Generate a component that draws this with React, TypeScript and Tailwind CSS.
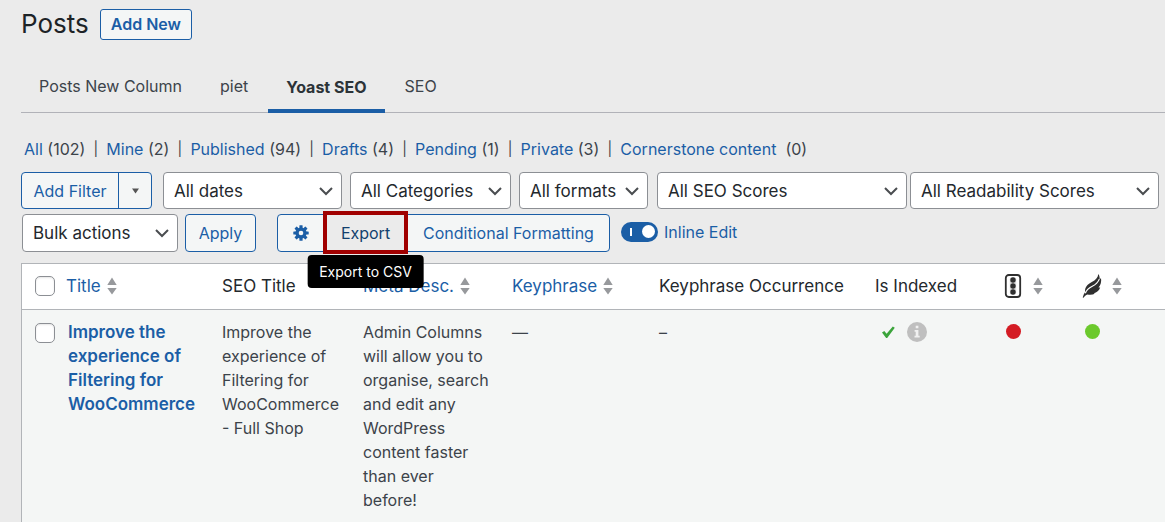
import type { ReactNode } from "react";

const tabs = [
  { label: "Posts New Column", active: false },
  { label: "piet", active: false },
  { label: "Yoast SEO", active: true },
  { label: "SEO", active: false },
];

const views = [
  { label: "All", count: 102 },
  { label: "Mine", count: 2 },
  { label: "Published", count: 94 },
  { label: "Drafts", count: 4 },
  { label: "Pending", count: 1 },
  { label: "Private", count: 3 },
];

function Select({ label, className }: { label: string; className: string }) {
  return (
    <div className={`relative ${className}`}>
      <select
        aria-label={label}
        className="h-full w-full appearance-none rounded-[4px] border border-[#8c8f94] bg-white pt-[2px] pr-6 pl-[10px] text-[17px] text-[#23282d]"
      >
        <option>{label}</option>
      </select>
      <svg
        className="pointer-events-none absolute top-1/2 right-[9px] h-[14px] w-[14px] -translate-y-1/2"
        viewBox="0 0 14 14"
        fill="none"
        stroke="#4a4d50"
        strokeWidth="2"
        aria-hidden="true"
      >
        <path d="M1 4l6 6 6-6" />
      </svg>
    </div>
  );
}

function SortArrows() {
  return (
    <svg width="10" height="18" viewBox="0 0 10 18" fill="#97999c" aria-hidden="true">
      <path d="M5 0.500l4.700 7.500H.3zM5 17.500L.3 11h9.400z" />
    </svg>
  );
}

function SortLink({ label, children }: { label?: string; children: ReactNode }) {
  return (
    <a
      href="#sort"
      aria-label={label}
      className={`flex items-center text-[#1b5ea6] ${label ? "gap-[10px]" : "gap-[6px]"}`}
    >
      {children}
      <SortArrows />
    </a>
  );
}

function Gear() {
  return (
    <svg width="16" height="16" viewBox="0 0 16 16" aria-hidden="true">
      <g fill="#1b5ea6">
        {[0, 45, 90, 135].map((a) => (
          <rect key={a} x="6.400" y="0.300" width="3.200" height="15.400" rx="0.500" transform={`rotate(${a} 8 8)`} />
        ))}
        <circle cx="8" cy="8" r="5.600" />
      </g>
      <circle cx="8" cy="8" r="2.300" fill="#f4f6f6" />
    </svg>
  );
}

function TrafficLight() {
  return (
    <svg width="20" height="24" viewBox="0 0 20 24" aria-hidden="true">
      <rect x="2.800" y="1" width="14.400" height="22" rx="3" fill="#fff" stroke="#2f2f2f" strokeWidth="1.800" />
      <rect x="6.800" y="3.200" width="6.400" height="17.600" rx="2" fill="#d9d9d9" />
      <g fill="#2f2f2f">
        <circle cx="10" cy="6" r="2.700" />
        <circle cx="10" cy="12" r="2.700" />
        <circle cx="10" cy="18" r="2.700" />
      </g>
    </svg>
  );
}

function Feather() {
  return (
    <svg width="20" height="24" viewBox="0 0 20 24" aria-hidden="true">
      <path
        fill="#2f2f2f"
        d="M16.300 0c1.200 1.800 1.600 3.600 1.300 5.600.6-.5 1-.9 1.400-1.600.6 3.800-.2 7-2.500 9.600h1.700c-1.200 3.200-3.400 5-6.400 5.600l1 .6c-2.200 1-4.500 1.200-7.300.7-1.700.6-3 1.700-4 3.300L.7 23.500c.6-2.200 1.300-4 2.400-5.600-.4-4.500 2-7.700 6.700-10 4-1.900 6.200-4.200 6.500-7.900z"
      />
      <path fill="none" stroke="#fff" strokeWidth="1.200" d="M3.300 19.300c1.200-3.600 3.800-5.400 7-7 3.300-1.700 5.800-4 7-7.200" />
    </svg>
  );
}

const checkbox =
  "block h-5 w-5 appearance-none rounded-[5px] border border-[#8c8f94] bg-white shadow-[inset_0_1px_2px_rgba(0,0,0,0.1)]";

export default function App() {
  return (
    <main className="flex min-h-screen flex-col bg-[#ebebeb] pl-[21px] font-['Inter','Liberation_Sans',sans-serif] text-base text-[#3c434a]">
      <header className="flex items-center gap-[11px] pt-2">
        <h1 className="text-[26px] leading-8 text-[#1d2327]">Posts</h1>
        <button className="h-[31px] rounded-[3px] border border-[#1b5ea6] bg-[#f4f6f6] px-[10px] text-base font-semibold text-[#1b5ea6]">
          Add New
        </button>
      </header>

      <nav aria-label="Table views" className="mt-5 flex h-[53px] gap-[2px] border-b border-[#b1b2b8]">
        {tabs.map((t) => (
          <a
            key={t.label}
            href="#view"
            aria-current={t.active ? "page" : undefined}
            className={
              t.active
                ? "-mb-px flex items-center border-b-4 border-[#1b5ea6] px-[18px] pt-1 font-bold text-[#2c3338]"
                : "flex items-center px-[18px]"
            }
          >
            {t.label}
          </a>
        ))}
      </nav>

      <ul className="mt-6 flex items-center pl-[3px] leading-6 whitespace-pre">
        {views.map((v) => (
          <li key={v.label} className="flex items-center">
            <a href="#status" className="text-[#1b5ea6]">
              {v.label}
            </a>
            {` (${v.count})`}
            <span className="w-[21px] text-center text-sm">|</span>
          </li>
        ))}
        <li>
          <a href="#cornerstone" className="text-[#1b5ea6]">
            Cornerstone content
          </a>
          {"  (0)"}
        </li>
      </ul>

      <div className="mt-[11px] flex h-[37px]">
        <div className="mr-[11px] flex w-[131px] divide-x divide-[#1b5ea6] overflow-hidden rounded-[4px] border border-[#1b5ea6] bg-[#f4f6f6] text-[#1b5ea6]">
          <button className="flex-1 whitespace-nowrap">Add Filter</button>
          <button aria-label="More filters" className="flex w-8 items-center justify-center">
            <svg width="7" height="6" viewBox="0 0 7 6" fill="#555" aria-hidden="true">
              <path d="M0 .5h7L3.500 5.500z" />
            </svg>
          </button>
        </div>
        <Select label="All dates" className="mr-2 w-[179px]" />
        <Select label="All Categories" className="mr-2 w-[161px]" />
        <Select label="All formats" className="mr-[9px] w-[129px]" />
        <Select label="All SEO Scores" className="mr-[3px] w-[250px]" />
        <Select label="All Readability Scores" className="w-[249px]" />
      </div>

      <div className="mt-[5px] flex h-[38px] pl-px">
        <Select label="Bulk actions" className="mr-[7px] w-[156px]" />
        <button className="mr-[21px] w-[71px] rounded-[4px] border border-[#1b5ea6] bg-[#f4f6f6] text-[#1b5ea6]">
          Apply
        </button>
        <div className="mr-[11px] flex rounded-[4px] border border-[#1b5ea6] bg-[#f4f6f6] text-[#1b5ea6]">
          <button aria-label="Settings" className="flex w-[46px] items-center justify-center">
            <Gear />
          </button>
          <div className="relative -mt-[4px] -mb-[3px] -ml-px w-[85px]">
            <button
              aria-describedby="export-tip"
              className="h-full w-full border-4 border-[#a00000] bg-[#ebebeb] text-[#123f6e]"
            >
              Export
            </button>
            <span
              id="export-tip"
              role="tooltip"
              className="absolute top-full left-1/2 z-10 mt-px -translate-x-1/2 rounded-[4px] bg-black px-3 py-[6px] text-sm leading-[21px] whitespace-nowrap text-white"
            >
              Export to CSV
            </span>
          </div>
          <button className="w-[201px] whitespace-nowrap">Conditional Formatting</button>
        </div>
        <label className="mb-[3px] flex items-center gap-[6px] text-[#1b5ea6]">
          <input
            type="checkbox"
            role="switch"
            defaultChecked
            className="flex h-5 w-[37px] appearance-none items-center justify-between rounded-full bg-[#1b5ea6] pr-[3px] pl-[9px] before:h-2 before:w-[2px] before:bg-white after:h-[13px] after:w-[13px] after:rounded-full after:bg-white"
          />
          Inline Edit
        </label>
      </div>

      <section className="mt-[11px] flex-1 border-t border-l border-[#b1b4b8] bg-[#f4f6f5]">
        <table className="w-full table-fixed text-left leading-6">
          <colgroup>
            <col className="w-[34px]" />
            <col className="w-[156px]" />
            <col className="w-[141px]" />
            <col className="w-[149px]" />
            <col className="w-[147px]" />
            <col className="w-[216px]" />
            <col className="w-[128px]" />
            <col className="w-[79px]" />
            <col />
          </colgroup>
          <thead>
            <tr className="h-[45px] border-b border-[#b1b4b8] bg-white text-[17px] text-[#23282d] [&>th]:p-0 [&>th]:pl-[10px] [&>th]:font-normal [&>th]:whitespace-nowrap">
              <th>
                <input type="checkbox" aria-label="Select all" className={`ml-[3px] ${checkbox}`} />
              </th>
              <th>
                <SortLink>Title</SortLink>
              </th>
              <th>SEO Title</th>
              <th>
                <SortLink>Meta Desc.</SortLink>
              </th>
              <th>
                <SortLink>Keyphrase</SortLink>
              </th>
              <th>Keyphrase Occurrence</th>
              <th>Is Indexed</th>
              <th>
                <SortLink label="SEO score">
                  <TrafficLight />
                </SortLink>
              </th>
              <th>
                <SortLink label="Readability score">
                  <Feather />
                </SortLink>
              </th>
            </tr>
          </thead>
          <tbody>
            <tr className="align-top [&>td]:pt-[10px] [&>td]:pl-[10px]">
              <td>
                <input
                  type="checkbox"
                  aria-label="Select Improve the experience of Filtering for WooCommerce"
                  className={`mt-[3px] ml-[3px] ${checkbox}`}
                />
              </td>
              <td>
                <a href="#post" className="block pr-3 pl-[2px] text-[17px] font-semibold text-[#1b5ea6]">
                  Improve the experience of Filtering for WooCommerce
                </a>
              </td>
              <td className="pr-3">Improve the experience of Filtering for WooCommerce - Full Shop</td>
              <td className="pr-[10px]">
                Admin Columns will allow you to organise, search and edit any WordPress content faster than ever before!
              </td>
              <td>—</td>
              <td>–</td>
              <td>
                <div className="flex h-6 items-center gap-3 pl-[7px]">
                  <svg width="13" height="12" viewBox="0 0 13 12" role="img" aria-label="Indexed">
                    <path d="M0 6.600L2.300 5l2.300 2.700L10.800.4 12.800 1.800 5.200 11.900H4.100z" fill="#3ba43b" />
                  </svg>
                  <svg width="20" height="20" viewBox="0 0 20 20" role="img" aria-label="Details">
                    <circle cx="10" cy="10" r="10" fill="#bfbfbf" />
                    <path d="M8.700 3.700h2.700v2.600H8.700zM7.600 8h3.800v5.700h1.300v1.800H7.500v-1.800h1.200V9.800H7.600z" fill="#f1f1f1" />
                  </svg>
                </div>
              </td>
              <td>
                <div className="flex h-6 w-5 items-center justify-center">
                  <span role="img" aria-label="Needs improvement" className="h-[15px] w-[15px] rounded-full bg-[#d41c24]" />
                </div>
              </td>
              <td>
                <div className="flex h-6 w-5 items-center justify-center">
                  <span role="img" aria-label="Good" className="h-[15px] w-[15px] rounded-full bg-[#6bc92c]" />
                </div>
              </td>
            </tr>
          </tbody>
        </table>
      </section>
    </main>
  );
}
